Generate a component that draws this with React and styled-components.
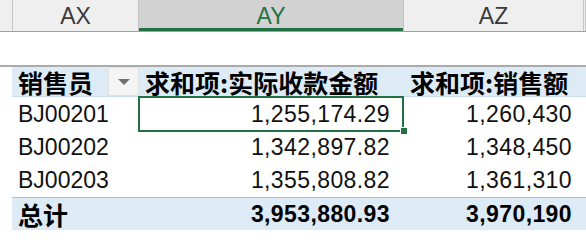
import React from 'react'
import styled, { createGlobalStyle } from 'styled-components'

const GlobalStyle = createGlobalStyle`
  html, body {
    margin: 0;
    padding: 0;
    background: #fff;
  }
`

const cols = [
  { key: 'AX', width: 126 },
  { key: 'AY', width: 265, active: true },
  { key: 'AZ', width: 180 },
]

const rows = [
  { name: 'BJ00201', paid: '1,255,174.29', sales: '1,260,430', selected: true },
  { name: 'BJ00202', paid: '1,342,897.82', sales: '1,348,450' },
  { name: 'BJ00203', paid: '1,355,808.82', sales: '1,361,310' },
]

const App = () => {
  return (
    <Sheet>
      <GlobalStyle />
      <ColumnBar>
        <ColLetter $width={13} />
        {cols.map(c => (
          <ColLetter key={c.key} $width={c.width} $active={c.active}>{c.key}</ColLetter>
        ))}
        <ColLetter $width={2} />
      </ColumnBar>
      <BlankRow />
      <Pivot>
        <PivotGrid>
          <HeadCell>
            销售员
            <FilterButton><Arrow /></FilterButton>
          </HeadCell>
          <HeadCell>求和项:实际收款金额</HeadCell>
          <HeadCell>求和项:销售额</HeadCell>

          {rows.map(r => (
            <React.Fragment key={r.name}>
              <NameCell>{r.name}</NameCell>
              <ValueCell $selected={r.selected}>
                {r.paid}
                {r.selected && <FillHandle />}
              </ValueCell>
              <ValueCell>{r.sales}</ValueCell>
            </React.Fragment>
          ))}

          <TotalCell>总计</TotalCell>
          <TotalCell $num>3,953,880.93</TotalCell>
          <TotalCell $num>3,970,190</TotalCell>
        </PivotGrid>
      </Pivot>
    </Sheet>
  )
}

const Sheet = styled.div`
  width: 586px;
  height: 246px;
  overflow: hidden;
  background: #fff;
  font-family: "Liberation Sans", "Noto Sans CJK SC", sans-serif;
  color: #111;
`

const ColumnBar = styled.div`
  display: flex;
  height: 31px;
  border-bottom: 1px solid #a0a0a0;
  background: #efefef;
`

const ColLetter = styled.div`
  flex: 0 0 ${p => p.$width}px;
  box-sizing: border-box;
  border-right: 1px solid #c4c4c4;
  display: flex;
  align-items: center;
  justify-content: center;
  font-size: 23px;
  padding-top: 2px;
  color: ${p => (p.$active ? '#217346' : '#3a3a3a')};
  background: ${p => (p.$active ? '#d2d2d2' : 'transparent')};
  box-shadow: ${p => (p.$active ? 'inset 0 -3px 0 #217346' : 'none')};
`

const BlankRow = styled.div`
  height: 33px;
`

const Pivot = styled.div`
  border-top: 2px solid #ababab;
  padding-left: 12px;
`

const PivotGrid = styled.div`
  display: grid;
  grid-template-columns: 127px 265px 1fr;
  grid-template-rows: 30px 34px 33px 33px 33px;
`

const HeadCell = styled.div`
  background: #ddebf7;
  border-bottom: 1px solid #c9ddef;
  display: flex;
  align-items: center;
  padding-left: 6px;
  font-family: "Noto Sans CJK SC", sans-serif;
  font-weight: 700;
  font-size: 25px;
  color: #000;
  white-space: nowrap;
`

const FilterButton = styled.div`
  margin-left: auto;
  width: 31px;
  height: 29px;
  box-sizing: border-box;
  background: #f4f4f4;
  border: 1px solid #e0e0e0;
  display: flex;
  align-items: center;
  justify-content: center;
`

const Arrow = styled.span`
  width: 0;
  height: 0;
  border-left: 6px solid transparent;
  border-right: 6px solid transparent;
  border-top: 6px solid #6f6f6f;
`

const NameCell = styled.div`
  display: flex;
  align-items: center;
  padding-left: 6px;
  font-size: 23px;
`

const ValueCell = styled.div`
  position: relative;
  display: flex;
  align-items: center;
  justify-content: flex-end;
  padding-right: 14px;
  font-size: 23px;
  letter-spacing: 0.4px;

  ${p => p.$selected && `
    &::after {
      content: '';
      position: absolute;
      left: -1px;
      top: -1px;
      right: 0;
      bottom: -1px;
      border: 2px solid #217346;
    }
  `}
`

const FillHandle = styled.span`
  position: absolute;
  right: -4px;
  bottom: -4px;
  width: 6px;
  height: 6px;
  background: #217346;
  border: 1px solid #fff;
  z-index: 1;
`

const TotalCell = styled.div`
  background: #ddebf7;
  border-top: 1px solid #9bc2e6;
  display: flex;
  align-items: center;
  justify-content: ${p => (p.$num ? 'flex-end' : 'flex-start')};
  padding: ${p => (p.$num ? '0 14px 0 0' : '0 0 0 6px')};
  font-weight: 700;
  font-size: ${p => (p.$num ? '23px' : '25px')};
  letter-spacing: ${p => (p.$num ? '0.4px' : '0')};
  font-family: ${p => (p.$num ? '"Liberation Sans", sans-serif' : '"Noto Sans CJK SC", sans-serif')};
  color: #000;
`

export default App
